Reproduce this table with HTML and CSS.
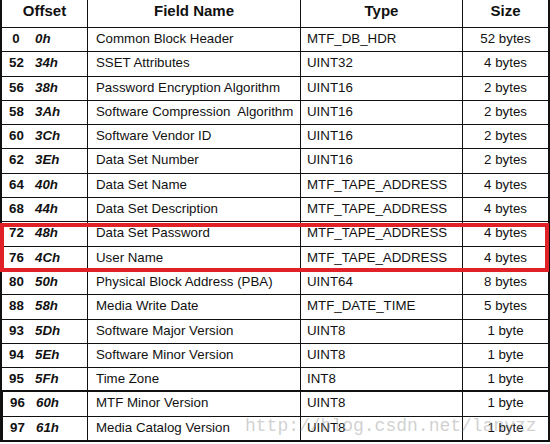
FILE: index.html
```html
<!DOCTYPE html>
<html>
<head>
<meta charset="utf-8">
<link rel="stylesheet" href="styles.css">
</head>
<body>
<div class="wrap">
<table class="tbl">
<colgroup>
<col class="c1"><col class="c2"><col class="c3"><col class="c4">
</colgroup>
<thead>
<tr><th>Offset</th><th>Field Name</th><th>Type</th><th>Size</th></tr>
</thead>
<tbody>
<tr><td class="off"><span class="dec">0</span><span class="hex">0h</span></td><td class="name">Common Block Header</td><td class="type">MTF_DB_HDR</td><td class="size">52 bytes</td></tr>
<tr><td class="off"><span class="dec">52</span><span class="hex">34h</span></td><td class="name">SSET Attributes</td><td class="type">UINT32</td><td class="size">4 bytes</td></tr>
<tr><td class="off"><span class="dec">56</span><span class="hex">38h</span></td><td class="name">Password Encryption Algorithm</td><td class="type">UINT16</td><td class="size">2 bytes</td></tr>
<tr><td class="off"><span class="dec">58</span><span class="hex">3Ah</span></td><td class="name">Software Compression&nbsp; Algorithm</td><td class="type">UINT16</td><td class="size">2 bytes</td></tr>
<tr><td class="off"><span class="dec">60</span><span class="hex">3Ch</span></td><td class="name">Software Vendor ID</td><td class="type">UINT16</td><td class="size">2 bytes</td></tr>
<tr><td class="off"><span class="dec">62</span><span class="hex">3Eh</span></td><td class="name">Data Set Number</td><td class="type">UINT16</td><td class="size">2 bytes</td></tr>
<tr><td class="off"><span class="dec">64</span><span class="hex">40h</span></td><td class="name">Data Set Name</td><td class="type">MTF_TAPE_ADDRESS</td><td class="size">4 bytes</td></tr>
<tr><td class="off"><span class="dec">68</span><span class="hex">44h</span></td><td class="name">Data Set Description</td><td class="type">MTF_TAPE_ADDRESS</td><td class="size">4 bytes</td></tr>
<tr><td class="off"><span class="dec">72</span><span class="hex">48h</span></td><td class="name">Data Set Password</td><td class="type">MTF_TAPE_ADDRESS</td><td class="size">4 bytes</td></tr>
<tr><td class="off"><span class="dec">76</span><span class="hex">4Ch</span></td><td class="name">User Name</td><td class="type">MTF_TAPE_ADDRESS</td><td class="size">4 bytes</td></tr>
<tr><td class="off"><span class="dec">80</span><span class="hex">50h</span></td><td class="name">Physical Block Address (PBA)</td><td class="type">UINT64</td><td class="size">8 bytes</td></tr>
<tr><td class="off"><span class="dec">88</span><span class="hex">58h</span></td><td class="name">Media Write Date</td><td class="type">MTF_DATE_TIME</td><td class="size">5 bytes</td></tr>
<tr><td class="off"><span class="dec">93</span><span class="hex">5Dh</span></td><td class="name">Software Major Version</td><td class="type">UINT8</td><td class="size">1 byte</td></tr>
<tr><td class="off"><span class="dec">94</span><span class="hex">5Eh</span></td><td class="name">Software Minor Version</td><td class="type">UINT8</td><td class="size">1 byte</td></tr>
<tr class="thick"><td class="off"><span class="dec">95</span><span class="hex">5Fh</span></td><td class="name">Time Zone</td><td class="type">INT8</td><td class="size">1 byte</td></tr>
<tr><td class="off"><span class="dec">96</span><span class="hex">60h</span></td><td class="name">MTF Minor Version</td><td class="type">UINT8</td><td class="size">1 byte</td></tr>
<tr class="last"><td class="off"><span class="dec">97</span><span class="hex">61h</span></td><td class="name">Media Catalog Version</td><td class="type">UINT8</td><td class="size">1 byte</td></tr>
</tbody>
</table>
<div class="highlight"></div>
<div class="watermark">http://blog.csdn.net/lanyzz</div>
</div>
</body>
</html>
```

FILE: styles.css
```css
html, body {
  margin: 0;
  padding: 0;
  background: #fff;
}

.wrap {
  position: relative;
  width: 550px;
  height: 444px;
  overflow: hidden;
}

.tbl {
  border-collapse: separate;
  border-spacing: 0;
  table-layout: fixed;
  width: 550px;
  font-family: "Liberation Sans", Arial, sans-serif;
  color: #111;
}

.c1 { width: 88px; }
.c2 { width: 213px; }
.c3 { width: 162px; }
.c4 { width: 87px; }

.tbl th,
.tbl td {
  border-right: 1px solid #111;
  border-bottom: 1px solid #111;
  box-sizing: border-box;
  white-space: nowrap;
  overflow: hidden;
}

.tbl th:first-child,
.tbl td:first-child {
  border-left: 2px solid #111;
}

.tbl th:last-child,
.tbl td:last-child {
  border-right: 2px solid #111;
}

.tbl th {
  font-size: 15px;
  font-weight: bold;
  line-height: 18px;
  padding: 2px 0 7px;
  text-align: center;
}

.tbl td {
  font-size: 13.3px;
  line-height: 17px;
  padding: 2px 0 4.3px;
  text-align: left;
}

.tbl tr.thick td {
  border-bottom-width: 2px;
  padding-bottom: 3.3px;
}

.tbl tr.thick + tr td:first-child,
.tbl tr.thick + tr + tr td:first-child {
  border-left-width: 3px;
}

.tbl tr.last td {
  border-bottom-width: 2px;
}

.off {
  padding-left: 7px !important;
  font-weight: bold;
}

.dec {
  display: inline-block;
  width: 14px;
  text-align: center;
}

.hex {
  margin-left: 12px;
  font-style: italic;
}

.name {
  padding-left: 8px !important;
}

.type {
  padding-left: 6px !important;
}

.size {
  text-align: center !important;
}

.highlight {
  position: absolute;
  left: 0;
  top: 223px;
  width: 549px;
  height: 49px;
  box-sizing: border-box;
  border: 4px solid #e02228;
}

.watermark {
  position: absolute;
  left: 245px;
  top: 417px;
  font-family: "Liberation Mono", "Courier New", monospace;
  font-size: 18px;
  line-height: 18px;
  color: rgba(150, 150, 150, 0.45);
  white-space: nowrap;
}
```
